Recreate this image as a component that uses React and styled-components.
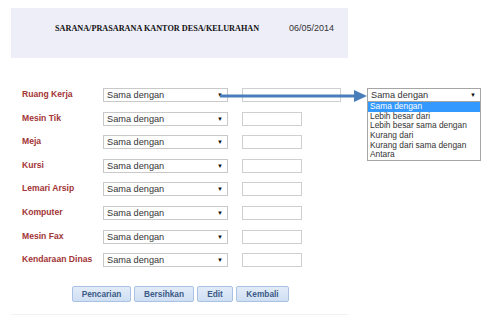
import React from "react";
import styled, { createGlobalStyle } from "styled-components";

const Global = createGlobalStyle`
  html, body { margin: 0; padding: 0; background: #fff; }
  body { font-family: "Liberation Sans", Arial, sans-serif; }
`;

const Page = styled.div`
  position: relative;
  width: 492px;
  height: 316px;
  overflow: hidden;
  padding: 8px 0 0 11px;
  box-sizing: border-box;
`;

const Header = styled.div`
  width: 337px;
  height: 50px;
  background: #eeeef9;
  display: flex;
  align-items: flex-start;
  padding: 15px 0 0 44px;
  box-sizing: border-box;
`;

const Title = styled.div`
  font-family: "Liberation Serif", "Times New Roman", serif;
  font-weight: bold;
  font-size: 8.2px;
  color: #111;
  width: 234px;
  line-height: 11px;
`;

const DateText = styled.div`
  font-size: 9px;
  color: #333;
  line-height: 11px;
`;

const Form = styled.div`
  display: grid;
  grid-template-columns: 81px 139px auto;
  grid-auto-rows: 23.6px;
  margin: 30px 0 0 11px;
  align-items: start;
`;

const Label = styled.div`
  font-size: 8.6px;
  font-weight: bold;
  color: #a23436;
  line-height: 11px;
  padding-top: 1px;
`;

const FakeSelect = styled.div`
  width: ${p => p.$w || 125}px;
  height: 14px;
  box-sizing: border-box;
  border: 1px solid ${p => p.$border || "#c9c9c9"};
  background: #fff;
  display: flex;
  align-items: center;
  justify-content: space-between;
  padding: 0 4px 0 3px;
  font-size: 9.2px;
  color: #333;
`;

const Caret = styled.span`
  font-size: 6px;
  color: #111;
`;

const TextBox = styled.div`
  width: ${p => (p.$wide ? 99 : 60)}px;
  height: 14px;
  box-sizing: border-box;
  border: 1px solid #cfcfcf;
  background: #fff;
`;

const Buttons = styled.div`
  display: flex;
  gap: 3px;
  margin: 9px 0 0 61px;
`;

const Btn = styled.div`
  width: ${p => p.$w}px;
  height: 16px;
  box-sizing: border-box;
  border: 1px solid #a9c2e3;
  border-radius: 2px;
  background: linear-gradient(#e3ecf8, #cfdff3);
  color: #3b5a86;
  font-size: 8.3px;
  font-weight: bold;
  display: flex;
  align-items: center;
  justify-content: center;
`;

const BottomLine = styled.div`
  width: 337px;
  height: 1px;
  background: #f1f1f1;
  margin-top: 12px;
`;

const Arrow = styled.svg`
  position: absolute;
  left: 218px;
  top: 89px;
`;

const Dropdown = styled.div`
  position: absolute;
  left: 367px;
  top: 88px;
  width: 114px;
`;

const List = styled.div`
  border: 1px solid #a5a5a5;
  border-top: none;
  background: #fff;
  width: 114px;
  box-sizing: border-box;
`;

const Option = styled.div`
  font-size: 8.4px;
  line-height: 9.7px;
  height: 9.7px;
  padding-left: 2px;
  color: ${p => (p.$active ? "#fff" : "#333")};
  background: ${p => (p.$active ? "#3399ff" : "transparent")};
  white-space: nowrap;
`;

const rows = [
  "Ruang Kerja",
  "Mesin Tik",
  "Meja",
  "Kursi",
  "Lemari Arsip",
  "Komputer",
  "Mesin Fax",
  "Kendaraan Dinas",
];

const options = [
  "Sama dengan",
  "Lebih besar dari",
  "Lebih besar sama dengan",
  "Kurang dari",
  "Kurang dari sama dengan",
  "Antara",
];

export default function App() {
  return (
    <>
      <Global />
      <Page>
        <Header>
          <Title>SARANA/PRASARANA KANTOR DESA/KELURAHAN</Title>
          <DateText>06/05/2014</DateText>
        </Header>
        <Form>
          {rows.map((r, i) => (
            <React.Fragment key={r}>
              <Label>{r}</Label>
              <FakeSelect>
                <span>Sama dengan</span>
                <Caret>▼</Caret>
              </FakeSelect>
              <TextBox $wide={i === 0} />
            </React.Fragment>
          ))}
        </Form>
        <Buttons>
          <Btn $w={59}>Pencarian</Btn>
          <Btn $w={60}>Bersihkan</Btn>
          <Btn $w={36}>Edit</Btn>
          <Btn $w={53}>Kembali</Btn>
        </Buttons>
        <BottomLine />
        <Arrow width="150" height="14" viewBox="0 0 150 14">
          <rect x="2" y="5.5" width="138" height="3" fill="#4a7ebb" />
          <polygon points="136,1 149,7 136,13" fill="#4a7ebb" />
        </Arrow>
        <Dropdown>
          <FakeSelect $w={114} $border="#a5a5a5">
            <span>Sama dengan</span>
            <Caret>▼</Caret>
          </FakeSelect>
          <List>
            {options.map((o, i) => (
              <Option key={o} $active={i === 0}>{o}</Option>
            ))}
          </List>
        </Dropdown>
      </Page>
    </>
  );
}
